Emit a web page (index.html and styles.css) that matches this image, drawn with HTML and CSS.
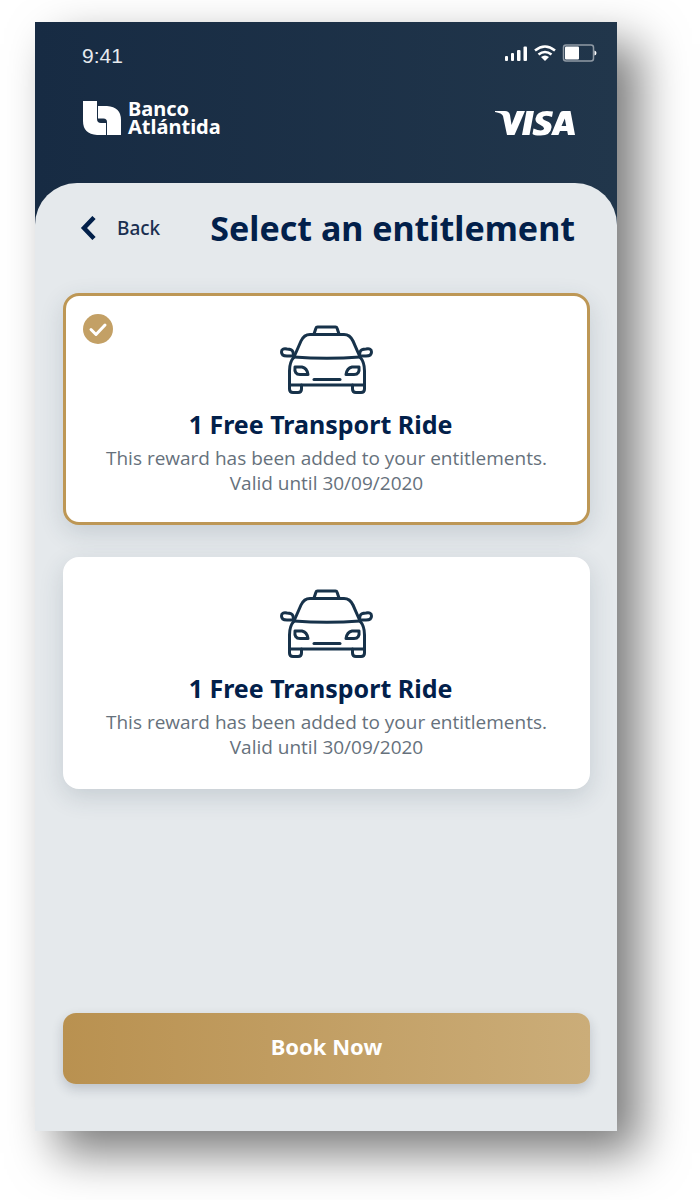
FILE: index.html
```html
<!DOCTYPE html>
<html lang="en">
<head>
  <meta charset="UTF-8">
  <meta name="viewport" content="width=device-width, initial-scale=1.0">
  <title>Select an entitlement</title>
  <link rel="stylesheet" href="styles.css">
</head>
<body>
  <!-- shared drawings -->
  <svg class="defs" aria-hidden="true">
    <symbol id="taxi" viewBox="0 0 94 70">
      <g fill="none" stroke="#17324a" stroke-width="3" stroke-linejoin="round" stroke-linecap="round">
        <path d="M34 9l2-6q.3-1 1.500-1h18q1.200 0 1.500 1l2 6"/>
        <path d="M14 32L21 16q3-6.500 9-6.500h34q6 0 9 6.500l7 16"/>
        <path d="M14 32q33 2.500 66 0"/>
        <path d="M14 32q-4.500 5-4.500 14v14h75V46q0-9-4.500-14"/>
        <path d="M9.500 60v4q0 3.500 3.500 3.500h5q3.500 0 3.500-3.500v-4M72.500 60v4q0 3.500 3.500 3.500h5q3.500 0 3.500-3.500v-4"/>
        <path d="M14 31H7q-5.500 0-5.500-4T7 24q5 0 6 3l.5 3M80 31h6q5.500 0 5.500-4T86 24q-5 0-6 3l-.5 3"/>
        <path d="M15 42h7q5 1 6 7.500h-8q-6 0-5-7.500zM79 42h-7q-5 1-6 7.500h8q6 0 5-7.500z"/>
        <path d="M34 54.500h26"/>
      </g>
    </symbol>
  </svg>

  <div class="screen">
    <div class="status">
      <span class="time">9:41</span>
      <svg class="signals" viewBox="0 0 92 18" aria-hidden="true">
        <g fill="#fff">
          <rect x="0" y="12" width="3" height="5" rx="1"/>
          <rect x="6" y="9" width="3" height="8" rx="1"/>
          <rect x="12" y="6" width="3.500" height="11" rx="1"/>
          <rect x="18.500" y="2.500" width="3.500" height="14.500" rx="1"/>
          <path d="M36 13q4-3 8 0l-4 4z"/>
          <rect x="60" y="2.500" width="14" height="13" rx="1"/>
          <path d="M89.500 6.500q2 .5 2 2.500t-2 2.500z"/>
        </g>
        <path d="M30 6.500q10-8 20 0M33.500 10.500q6.500-5 13 0" fill="none" stroke="#fff" stroke-width="2.600"/>
        <rect x="58.500" y="1" width="30" height="16" rx="2.500" fill="none" stroke="#fff" stroke-opacity=".5" stroke-width="1.500"/>
      </svg>
    </div>

    <header class="brands">
      <div class="bank">
        <svg class="bank-mark" viewBox="0 0 38 34" aria-hidden="true">
          <path fill="#fff" d="M0 0h14v18q0 4 4 4h5v12H14Q0 33 0 20z"/>
          <path fill="#fff" d="M15 5h9q14 1 14 14v15H24V21q0-3.500-3.500-3.500H15z"/>
        </svg>
        <span class="bank-name">Banco<br>Atlántida</span>
      </div>
      <svg class="visa" viewBox="0 0 80 26" role="img" aria-label="VISA">
        <g fill="#fff">
          <path d="M0 1h10q4 0 5 4l1.500 10L22 1h8L19.500 25H12L8 6Q7 3 0 2z"/>
          <path d="M31.500 1H39l-4.500 24H27z"/>
          <path d="M58 1.500l-1 5.500q-8-2.500-9.500.5 0 2 4 3.500 5.500 2 5 6.500-1 8.500-12 8-5 0-7-1.500l1-5.500q8.500 3.500 10.500.5.500-2-3.500-4-5.500-2.500-5-6.500Q42-1 58 1.500z"/>
          <path fill-rule="evenodd" d="M68 1h7.500L80 25h-7l-.8-4H65l-1.600 4H56L65 3q1-2 3-2zM69.800 8.500L66.500 16h4.700z"/>
        </g>
      </svg>
    </header>

    <main class="panel">
      <div class="heading">
        <a class="back" href="#">
          <svg class="chevron" viewBox="0 0 16 24" aria-hidden="true"><path d="M14 1.500L4 12l10 10.500" fill="none" stroke="#02204a" stroke-width="4.500"/></svg>
          Back
        </a>
        <h1>Select an entitlement</h1>
      </div>

      <div class="cards">
        <button type="button" class="card active">
          <svg class="check" viewBox="0 0 30 30" aria-hidden="true">
            <circle cx="15" cy="15" r="15" fill="#c3a065"/>
            <path d="M8 15.500l5 5L22 11" fill="none" stroke="#fff" stroke-width="3" stroke-linecap="round" stroke-linejoin="round"/>
          </svg>
          <svg class="taxi" aria-hidden="true"><use href="#taxi"/></svg>
          <strong>1 Free Transport Ride</strong>
          <span>This reward has been added to your entitlements.</span>
          <span>Valid until 30/09/2020</span>
        </button>
        <button type="button" class="card">
          <svg class="taxi" aria-hidden="true"><use href="#taxi"/></svg>
          <strong>1 Free Transport Ride</strong>
          <span>This reward has been added to your entitlements.</span>
          <span>Valid until 30/09/2020</span>
        </button>
      </div>

      <button type="button" class="book">Book Now</button>
    </main>
  </div>
</body>
</html>
```
FILE: styles.css
```css
* {
  box-sizing: border-box;
}
body {
  margin: 0;
  padding: 22px 83px 69px 35px;
  min-height: 100vh;
  display: flex;
  background: #fff;
  font-family: "Noto Sans", "Open Sans", sans-serif;
  color: #02204a;
}
.defs {
  position: absolute;
  width: 0;
  height: 0;
}
.screen {
  flex: 1;
  display: flex;
  flex-direction: column;
  background: linear-gradient(to right, #172b43, #21364b);
  box-shadow: 22px 22px 44px rgba(0, 0, 0, .52);
}
.status {
  display: flex;
  justify-content: space-between;
  align-items: flex-start;
  padding: 22px 20px 0 47px;
}
.time {
  font: 21px/24px "Liberation Sans", Arial, sans-serif;
  color: #e6eaee;
}
.signals {
  width: 92px;
  height: 18px;
}
.brands {
  display: flex;
  justify-content: space-between;
  align-items: flex-end;
  padding: 32px 42px 47px 48px;
}
.bank {
  display: flex;
  align-items: center;
  gap: 7px;
}
.bank-mark {
  width: 38px;
  height: 34px;
}
.bank-name {
  font-weight: 700;
  font-size: 20px;
  line-height: 18px;
  color: #fff;
}
.visa {
  width: 80px;
  height: 26px;
}
.panel {
  flex: 1;
  display: flex;
  flex-direction: column;
  padding: 20px 27px 47px 28px;
  background: #e5e9ec;
  border-radius: 42px 42px 0 0;
}
.heading {
  display: flex;
  justify-content: space-between;
  align-items: center;
  padding: 0 15px 0 17px;
}
.back {
  display: flex;
  align-items: center;
  gap: 21px;
  font-weight: 500;
  font-size: 19px;
  color: #1a2f50;
  text-decoration: none;
}
.chevron {
  width: 16px;
  height: 24px;
}
h1 {
  margin: 0;
  font-size: 34px;
  line-height: 50px;
}
.cards {
  display: grid;
  gap: 32px;
  margin: 40px 0;
}
.card {
  position: relative;
  display: flex;
  flex-direction: column;
  align-items: center;
  min-height: 232px;
  padding: 29px 20px 24px;
  border: 3px solid #fff;
  border-radius: 16px;
  background: #fff;
  box-shadow: 0 8px 24px rgba(35, 60, 80, .16);
  font-family: inherit;
  color: #66717c;
}
.card.active {
  border-color: #bd9755;
}
.check {
  position: absolute;
  left: 17px;
  top: 18px;
  width: 30px;
  height: 30px;
}
.taxi {
  width: 94px;
  height: 70px;
  margin-bottom: 11px;
}
.card strong {
  margin-bottom: 4px;
  padding-right: 12px;
  font-size: 25px;
  line-height: 36px;
  color: #02204a;
}
.card span {
  font-family: "Open Sans", sans-serif;
  font-size: 19px;
  line-height: 25px;
}
.book {
  height: 71px;
  margin-top: auto;
  padding-bottom: 6px;
  border: 0;
  border-radius: 13px;
  background: linear-gradient(to right, #b99150, #cbad79);
  box-shadow: 0 5px 12px rgba(30, 40, 60, .2);
  font: 700 22px/30px "Noto Sans", "Open Sans", sans-serif;
  color: #fff;
}
```
